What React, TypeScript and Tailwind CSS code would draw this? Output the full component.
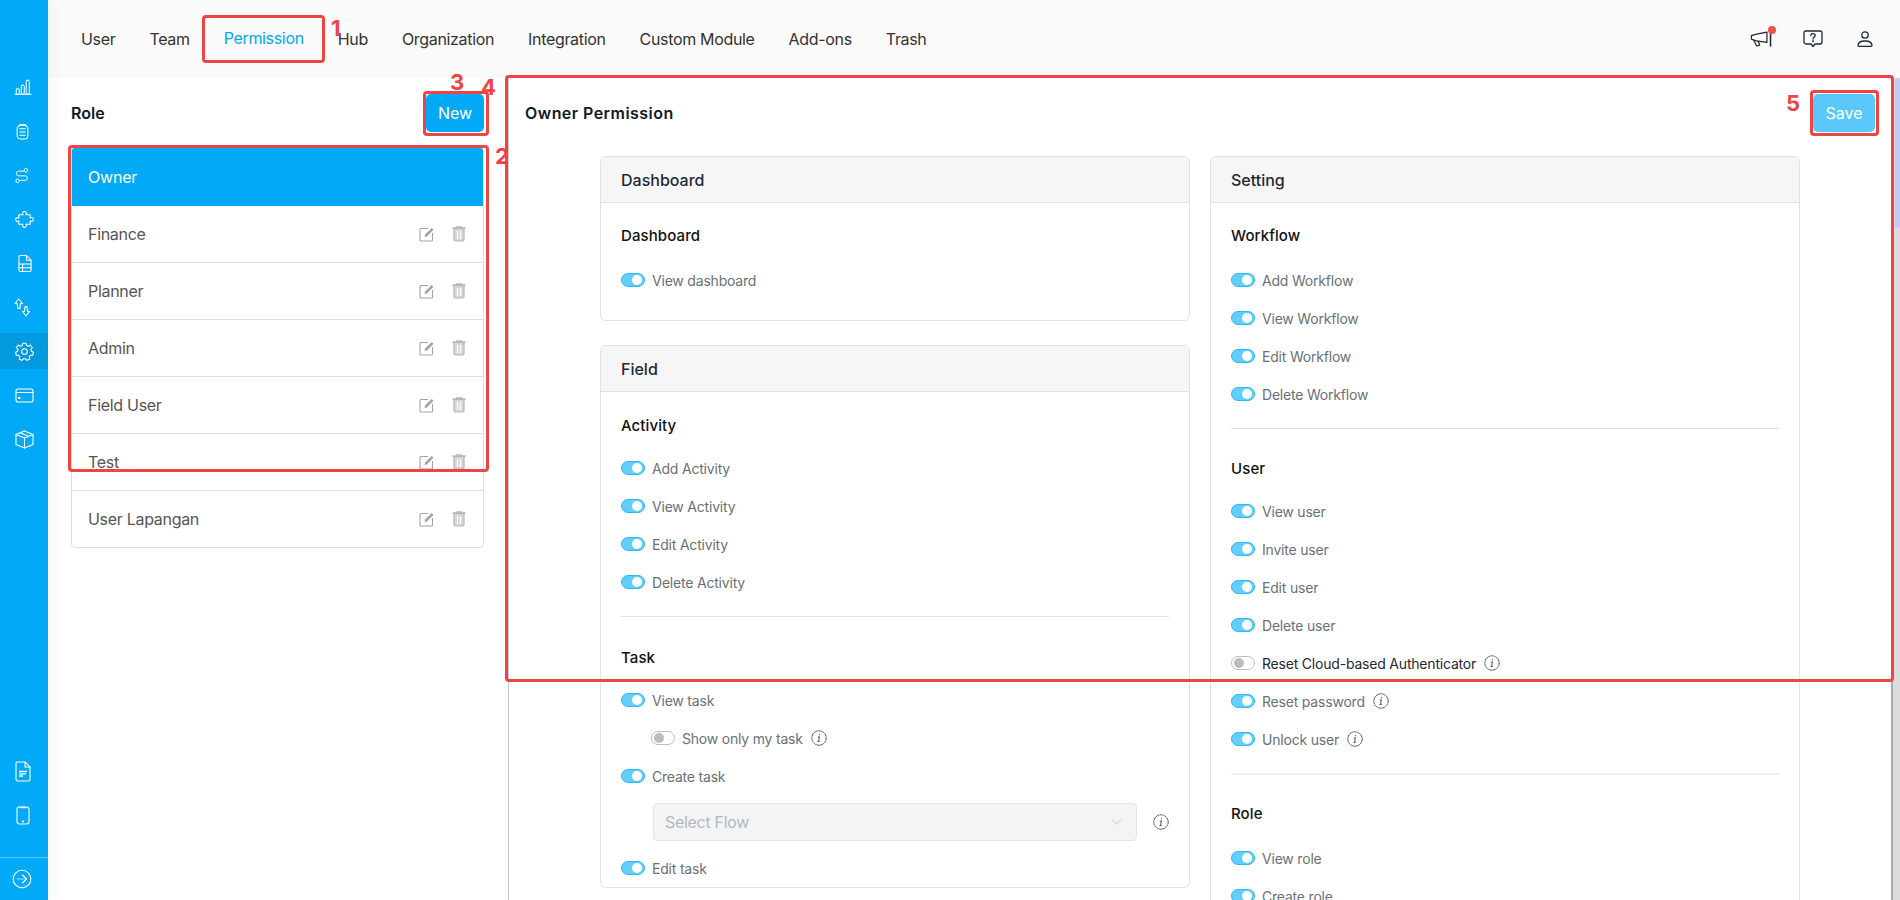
import React from 'react';

const SW = { fill: 'none', stroke: 'currentColor', strokeWidth: 1.1, strokeLinecap: 'round', strokeLinejoin: 'round' } as const;

function BarsIcon() {
  return (
    <svg width="18" height="17" viewBox="0 0 20 18" {...SW}>
      <path d="M1 16.500h18" />
      <rect x="2.500" y="10.500" width="3.400" height="6" rx="1" />
      <rect x="8" y="6.500" width="3.400" height="10" rx="1" />
      <rect x="13.600" y="1" width="3.400" height="15.500" rx="1" />
    </svg>
  );
}
function ClipboardIcon() {
  return (
    <svg width="13" height="17" viewBox="0 0 14 18" {...SW}>
      <rect x="1.200" y="2.500" width="11.600" height="14.500" rx="3.500" />
      <path d="M4 2.500V1.600h6v.9M4 6h6M4 9.500h6M4 13h6" />
    </svg>
  );
}
function RouteIcon() {
  return (
    <svg width="14" height="17" viewBox="0 0 16 18" {...SW}>
      <circle cx="12.500" cy="3" r="2" />
      <circle cx="3" cy="15" r="2" />
      <path d="M10 4H4.200a2.700 2.700 0 0 0 0 5.400h7.400a2.500 2.500 0 0 1 0 5.100H6" />
    </svg>
  );
}
function PuzzleIcon() {
  return (
    <svg width="19" height="17" viewBox="1 0 20 18" {...SW}>
      <path d="M5 4h4.500a2 2 0 1 1 3 0H17v3.500a2 2 0 1 1 0 3V14h-4.500a2 2 0 1 1-3 0H5v-3.500a2 2 0 1 1 0-3z" />
    </svg>
  );
}
function SheetIcon() {
  return (
    <svg width="14" height="19" viewBox="0 0 15 19" {...SW}>
      <path d="M2.500 1h6.500l5 5v10.500a1.500 1.500 0 0 1-1.500 1.500h-10A1.500 1.500 0 0 1 1 16.500v-14A1.500 1.500 0 0 1 2.500 1z" />
      <path d="M9 1v5h5M1 10h13M1 14h13M5 10v8" />
    </svg>
  );
}
function SwapIcon() {
  return (
    <svg width="17" height="19" viewBox="0 0 17 19" {...SW}>
      <path d="M4.500 1 1 5.500h2L4 10.500h2l.5-5h2z" />
      <path d="M12 18l3.500-4.500h-2L13 8.500h-2l-.5 5h-2z" />
    </svg>
  );
}
function GearIcon() {
  return (
    <svg width="19" height="19" viewBox="0 0 19 19" {...SW}>
      <circle cx="9.500" cy="9.500" r="2.800" />
      <path d="M8 1.200h3l.6 2.200 1.700.8 2-1.100 2 2.400-1.300 1.900.4 1.900 2 1-.7 3-2.300.1-1.200 1.500.5 2.200-2.800 1.300-1.500-1.700h-1.800l-1.500 1.700-2.800-1.300.5-2.200-1.200-1.500-2.300-.1-.7-3 2-1 .4-1.900L1.300 5.500l2-2.400 2 1.100 1.700-.8z" />
    </svg>
  );
}
function CardIcon() {
  return (
    <svg width="19" height="15" viewBox="0 0 19 15" {...SW}>
      <rect x="1" y="1" width="17" height="13" rx="2" />
      <path d="M1 4.500h17" />
      <rect x="3" y="9" width="2.500" height="2" fill="currentColor" stroke="none" />
    </svg>
  );
}
function BoxIcon() {
  return (
    <svg width="19" height="19" viewBox="0 0 19 19" {...SW}>
      <path d="M9.500 1 18 4.500v10L9.500 18 1 14.500v-10z" />
      <path d="M1 4.500 9.500 8 18 4.500M9.500 8v10M5 2.800l8.500 3.500" />
    </svg>
  );
}
function DocIcon() {
  return (
    <svg width="16" height="21" viewBox="0 0 16 21" {...SW}>
      <path d="M2.500 1H10l5 5v12.500a1.500 1.500 0 0 1-1.500 1.500h-11A1.500 1.500 0 0 1 1 18.500v-16A1.500 1.500 0 0 1 2.500 1z" />
      <path d="M10 1v5h5" />
      <path d="M4.500 10.500h7M4.500 12.800h6M4.500 15h3" strokeWidth="1.300" />
    </svg>
  );
}
function PhoneIcon() {
  return (
    <svg width="14" height="19" viewBox="0 0 14 19" {...SW}>
      <rect x="1" y="1" width="12" height="17" rx="2.500" />
      <path d="M4.500 1.500h5" strokeWidth="1.600" />
      <circle cx="7" cy="15.500" r=".5" fill="currentColor" />
    </svg>
  );
}
function ArrowCircleIcon() {
  return (
    <svg width="20" height="20" viewBox="0 0 20 20" {...SW}>
      <circle cx="10" cy="10" r="8.800" />
      <path d="M5 10h9.500" strokeOpacity=".6" />
      <path d="M10.500 6l4 4-4 4" />
    </svg>
  );
}
function MegaphoneIcon() {
  return (
    <svg width="22" height="16" viewBox="0 0 20.500 15.500" fill="none" stroke="#1f2937" strokeWidth="1.200" strokeLinejoin="round" strokeLinecap="round">
      <path d="M1 4.500 6 3l10-2v10L6 9.500 1 8z" />
      <path d="M3 8.500 6 14.500l3-.7L7.500 10" />
      <path d="M19.500 1.500v13" strokeWidth="1.500" />
    </svg>
  );
}
function HelpChatIcon() {
  return (
    <svg width="20" height="18" viewBox="0 0 20 18" fill="none" stroke="#1f2937" strokeWidth="1.300" strokeLinejoin="round" strokeLinecap="round">
      <path d="M3 1h14a2 2 0 0 1 2 2v9a2 2 0 0 1-2 2h-5l-2 2.500L8 14H3a2 2 0 0 1-2-2V3a2 2 0 0 1 2-2z" />
      <path d="M7.800 5.500C8 3 12.200 3 12.200 5.500c0 1.600-2.200 1.600-2.200 3.500" />
      <circle cx="10" cy="11.300" r=".4" fill="#1f2937" />
    </svg>
  );
}
function PersonIcon() {
  return (
    <svg width="16" height="16" viewBox="0 0 16 16" fill="none" stroke="#1f2937" strokeWidth="1.300" strokeLinejoin="round">
      <circle cx="8" cy="4" r="3.200" />
      <path d="M1 14.800c0-3 3-4.800 7-4.800s7 1.800 7 4.800c0 .3-.2.500-.5.500h-13c-.3 0-.5-.2-.5-.5z" />
    </svg>
  );
}
function EditIcon() {
  return (
    <svg width="16" height="15" viewBox="0 0 16 15" fill="none" stroke="#a3a3a3" strokeWidth="1.100">
      <path d="M9 1.500H2a1 1 0 0 0-1 1V13a1 1 0 0 0 1 1h10.500a1 1 0 0 0 1-1V6" />
      <path d="M5.500 10l.6-2.400L12.700 1l1.800 1.800L7.900 9.400z" fill="#a3a3a3" stroke="none" />
    </svg>
  );
}
function TrashIcon() {
  return (
    <svg width="14" height="16" viewBox="0 0 14 16" fill="none" stroke="#b5b5b5" strokeWidth="1.200">
      <path d="M.5 2.200h13" strokeWidth="1.800" />
      <path d="M4.500 2V.8h5V2" />
      <path d="M2 3v10.500A1.500 1.500 0 0 0 3.500 15h7a1.500 1.500 0 0 0 1.500-1.500V3" fill="#d8d8d8" />
      <path d="M5.500 5v8M8.500 5v8" stroke="#ffffff" />
    </svg>
  );
}
function InfoIcon() {
  return (
    <svg width="16" height="16" viewBox="0 0 16 16" fill="none" stroke="#4b5563" strokeWidth="1">
      <circle cx="8" cy="8" r="7.200" strokeDasharray="2.400 .3" />
      <path d="M8.300 7 7.600 11.500M7.200 7h1.100M6.900 11.500h1.400" strokeLinecap="round" />
      <circle cx="8.500" cy="4.700" r=".6" fill="#4b5563" stroke="none" />
    </svg>
  );
}

function Toggle({ on = true }: { on?: boolean }) {
  if (!on) {
    return (
      <span className="w-6 h-[14px] rounded-full border border-[#bdbdbd] bg-white flex items-center pl-[2px] shrink-0">
        <span className="w-[10px] h-[10px] rounded-full bg-[#bdbdbd]" />
      </span>
    );
  }
  return (
    <span className="w-6 h-[14px] rounded-full bg-[#63cdfb] border border-[#2fb8f7] flex items-center justify-end pr-[2px] shrink-0">
      <span className="w-[10px] h-[10px] rounded-full bg-white" />
    </span>
  );
}

function Perm({ label, on = true, info, dark }: { label: string; on?: boolean; info?: boolean; dark?: boolean }) {
  return (
    <div className="h-[38px] flex items-center gap-[7px]">
      <Toggle on={on} />
      <span className={`text-[14px] tracking-[-0.2px] ${dark ? 'text-[#1f2937]' : 'text-[#6b7078]'}`}>{label}</span>
      {info && <span className="ml-[1px] flex"><InfoIcon /></span>}
    </div>
  );
}

function PermCard({ title, children, className = '' }: { title: string; children: React.ReactNode; className?: string }) {
  return (
    <div className={`border border-[#e2e2e2] rounded-[6px] bg-white ${className}`}>
      <div className="h-[46px] bg-[#f6f6f6] border-b border-[#e2e2e2] rounded-t-[6px] px-[20px] flex items-center text-[16px] font-medium text-[#1f2937]">
        {title}
      </div>
      <div className="px-[20px]">{children}</div>
    </div>
  );
}

function Heading({ children }: { children: React.ReactNode }) {
  return <div className="h-[24px] flex items-center text-[15px] tracking-[0.1px] font-medium text-[#111111]">{children}</div>;
}

const navItems = ['User', 'Team', 'Permission', 'Hub', 'Organization', 'Integration', 'Custom Module', 'Add-ons', 'Trash'];
const roles = ['Finance', 'Planner', 'Admin', 'Field User', 'Test', 'User Lapangan'];

const topIcons = [
  { key: 'bars', el: <BarsIcon />, pad: 'pl-[14px]', active: false },
  { key: 'clip', el: <ClipboardIcon />, pad: 'pl-[16px]', active: false },
  { key: 'route', el: <RouteIcon />, pad: 'pl-[15px]', active: false },
  { key: 'puzzle', el: <PuzzleIcon />, pad: 'pl-[15px]', active: false },
  { key: 'sheet', el: <SheetIcon />, pad: 'pl-[18px]', active: false },
  { key: 'swap', el: <SwapIcon />, pad: 'pl-[14px]', active: false },
  { key: 'gear', el: <GearIcon />, pad: 'pl-[15px]', active: true },
  { key: 'card', el: <CardIcon />, pad: 'pl-[15px]', active: false },
  { key: 'box', el: <BoxIcon />, pad: 'pl-[15px]', active: false },
];

function Sidebar() {
  return (
    <aside className="w-12 h-full bg-[#02a9f7] text-white flex flex-col shrink-0 relative z-10 shadow-[4px_0_14px_rgba(60,70,120,0.05)]">
      <div className="pt-[65px] flex flex-col">
        {topIcons.map((i) => (
          <div key={i.key} className="h-[44px] flex items-center">
            <div className={`h-[36px] w-full flex items-center ${i.pad} ${i.active ? 'bg-[#0399df]' : ''}`}>
              {i.el}
            </div>
          </div>
        ))}
      </div>
      <div className="mt-auto flex flex-col">
        <div className="h-[44px] flex items-center pl-[15px]"><DocIcon /></div>
        <div className="h-[44px] flex items-center pl-[16px]"><PhoneIcon /></div>
        <div className="h-[43px] mt-[20px] border-t border-[#5cc8fa] flex items-center pl-[12px]"><ArrowCircleIcon /></div>
      </div>
    </aside>
  );
}

function TopBar() {
  return (
    <header className="h-[78px] bg-[#fafafa] flex items-center pl-[33px] pr-[27px] shrink-0">
      <nav className="flex items-center gap-[34px] text-[16px] tracking-[-0.33px] text-[#333333]">
        {navItems.map((n) => (
          <span key={n} className={n === 'Permission' ? 'text-[#03a9f4] -translate-y-px' : ''}>{n}</span>
        ))}
      </nav>
      <div className="ml-auto flex items-center gap-[31px]">
        <span className="relative flex">
          <MegaphoneIcon />
          <span className="absolute -top-[5px] right-[-4px] w-2 h-2 rounded-full bg-[#ef5350]" />
        </span>
        <HelpChatIcon />
        <span className="ml-[3px] flex"><PersonIcon /></span>
      </div>
    </header>
  );
}

function RolePanel() {
  return (
    <section className="w-[460px] shrink-0 pl-[23px] pr-[24px] pt-[16px]">
      <div className="h-[38px] flex items-center justify-between mb-[15px]">
        <span className="text-[16px] font-semibold text-[#111827]">Role</span>
        <button className="w-[58px] h-[38px] bg-[#02a9f7] text-white text-[16px] rounded-[5px]">New</button>
      </div>
      <div className="border border-[#dfdfdf] rounded-[4px] overflow-hidden">
        <div className="h-[58px] bg-[#02a9f7] text-white text-[16px] tracking-[-0.2px] flex items-center pl-[16px]">Owner</div>
        {roles.map((r, i) => (
          <div key={r} className={`flex items-center pl-[16px] pr-[17px] text-[16px] tracking-[-0.3px] text-[#555555] ${i < roles.length - 1 ? 'h-[57px] border-b border-[#dfdfdf]' : 'h-[56px]'}`}>
            <span>{r}</span>
            <span className="ml-auto flex items-center gap-[17px]">
              <EditIcon />
              <TrashIcon />
            </span>
          </div>
        ))}
      </div>
    </section>
  );
}

function MainPanel() {
  return (
    <section className="w-[1385px] shrink-0 border-x border-[#c9c9c9] border-r-2 border-r-[#a9a9a9] h-full overflow-hidden">
      <div className="h-[78px] pt-[16px] pl-[16px] pr-[16px]">
        <div className="h-[38px] flex items-center justify-between">
          <h2 className="text-[16px] font-semibold tracking-[0.45px] text-[#111827]">Owner Permission</h2>
          <button className="w-[62px] h-[38px] bg-[#5ac8fa] text-white text-[16px] rounded-[5px]">Save</button>
        </div>
      </div>
      <div className="grid grid-cols-[590px_590px] gap-x-[20px] ml-[91px]">
        <div className="flex flex-col gap-[24px]">
          <PermCard title="Dashboard">
            <div className="pt-[21px]"><Heading>Dashboard</Heading></div>
            <div className="pt-[13px] pb-[21px]"><Perm label="View dashboard" /></div>
          </PermCard>
          <PermCard title="Field">
            <div className="pt-[22px]"><Heading>Activity</Heading></div>
            <div className="pt-[11px] pb-[15px] border-b border-[#e2e2e2]">
              <Perm label="Add Activity" />
              <Perm label="View Activity" />
              <Perm label="Edit Activity" />
              <Perm label="Delete Activity" />
            </div>
            <div className="pt-[29px]"><Heading>Task</Heading></div>
            <div className="pt-[11px]">
              <Perm label="View task" />
              <div className="pl-[30px]"><Perm label="Show only my task" on={false} info /></div>
              <Perm label="Create task" />
              <div className="flex items-center h-[38px] my-[8px]">
                <div className="ml-[32px] w-[484px] h-[38px] bg-[#f3f4f6] border border-[#e2e4e8] rounded-[4px] flex items-center justify-between pl-[11px] pr-[14px] text-[16px] tracking-[-0.3px] text-[#b4b8bf]">
                  <span>Select Flow</span>
                  <svg width="11" height="6" viewBox="0 0 11 6" fill="none" stroke="#c4c7cc" strokeWidth="1"><path d="M1 .8l4.500 4.500L10 .8" /></svg>
                </div>
                <span className="ml-[16px] flex"><InfoIcon /></span>
              </div>
              <Perm label="Edit task" />
            </div>
          </PermCard>
        </div>
        <PermCard title="Setting">
          <div className="pt-[21px]"><Heading>Workflow</Heading></div>
          <div className="pt-[13px] pb-[15px] border-b border-[#e2e2e2]">
            <Perm label="Add Workflow" />
            <Perm label="View Workflow" />
            <Perm label="Edit Workflow" />
            <Perm label="Delete Workflow" />
          </div>
          <div className="pt-[28px]"><Heading>User</Heading></div>
          <div className="pt-[11px] pb-[15px] border-b-2 border-[#eeeeee]">
            <Perm label="View user" />
            <Perm label="Invite user" />
            <Perm label="Edit user" />
            <Perm label="Delete user" />
            <Perm label="Reset Cloud-based Authenticator" on={false} info dark />
            <Perm label="Reset password" info />
            <Perm label="Unlock user" info />
          </div>
          <div className="pt-[27px]"><Heading>Role</Heading></div>
          <div className="pt-[13px]">
            <Perm label="View role" />
            <Perm label="Create role" />
          </div>
        </PermCard>
      </div>
    </section>
  );
}

function Annotations() {
  const box = 'absolute border-[3px] border-[#ef4444] rounded-[4px] pointer-events-none';
  const num = 'absolute text-[#ef4444] text-[22px] leading-none font-bold pointer-events-none';
  return (
    <>
      <div className={`${box} left-[202px] top-[15px] w-[123px] h-[48px]`} />
      <div className={`${box} left-[423px] top-[91px] w-[66px] h-[45px]`} />
      <div className={`${box} left-[68px] top-[145px] w-[421px] h-[327px]`} />
      <div className={`${box} left-[505px] top-[75px] w-[1389px] h-[607px]`} />
      <div className={`${box} left-[1810px] top-[90px] w-[69px] h-[46px]`} />
      <span className={`${num} left-[331px] top-[17px]`}>1</span>
      <span className={`${num} left-[495px] top-[145px]`}>2</span>
      <span className={`${num} left-[450px] top-[71px]`}>3</span>
      <span className={`${num} left-[481px] top-[76px]`}>4</span>
      <span className={`${num} left-[1786px] top-[92px]`}>5</span>
    </>
  );
}

export default function App() {
  return (
    <div className="relative h-[900px] w-[1900px] overflow-hidden flex bg-white font-['Inter',sans-serif]">
      <Sidebar />
      <div className="flex-1 flex flex-col min-w-0">
        <TopBar />
        <div className="flex-1 min-h-0 flex">
          <RolePanel />
          <MainPanel />
          <div className="w-[7px] h-full bg-[#dcdcdc]">
            <div className="h-[150px] ml-[2px] bg-[#c0caf5] rounded-[3px]" />
          </div>
        </div>
      </div>
      <Annotations />
    </div>
  );
}
